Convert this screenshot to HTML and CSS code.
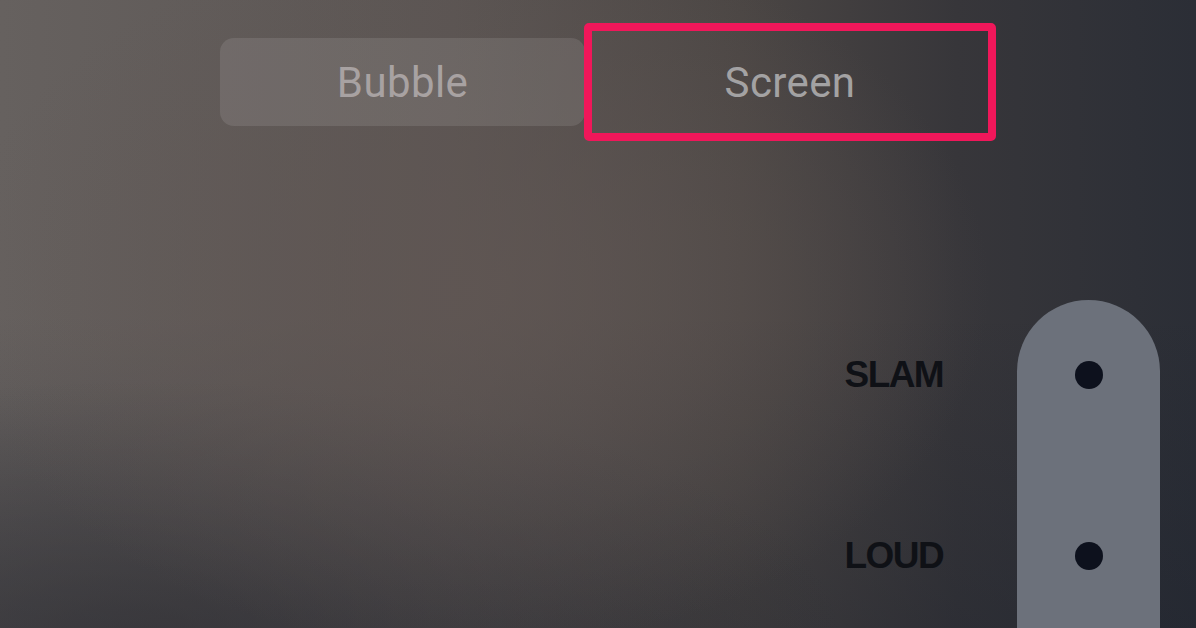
FILE: index.html
```html
<!DOCTYPE html>
<html>
<head>
<meta charset="utf-8">
<link rel="stylesheet" href="styles.css">
</head>
<body>
<div class="page">
  <div class="seg">
    <div class="opt bubble">Bubble</div>
    <div class="opt screen">Screen</div>
  </div>
  <div class="panel">
    <div class="track"></div>
    <div class="label l1">SLAM</div>
    <div class="dot d1"></div>
    <div class="label l2">LOUD</div>
    <div class="dot d2"></div>
  </div>
</div>
</body>
</html>
```
FILE: styles.css
```css
html, body {
  margin: 0;
  padding: 0;
}
body {
  width: 1196px;
  height: 628px;
  overflow: hidden;
  font-family: Roboto, "Liberation Sans", sans-serif;
  background:
    radial-gradient(ellipse 520px 360px at 470px 290px, rgba(96, 86, 83, 0.8) 0%, rgba(96, 86, 83, 0) 100%),
    radial-gradient(ellipse 700px 260px at 150px 640px, rgba(40, 40, 46, 0.55) 0%, rgba(40, 40, 46, 0) 100%),
    linear-gradient(to bottom, rgba(0,0,0,0) 50%, rgba(22, 28, 40, 0.3) 100%),
    linear-gradient(to right, #66615f 0%, #5b5553 38%, #4b4644 62%, #37363a 80%, #2b2e36 100%);
}
.page {
  height: 628px;
  display: flex;
  flex-direction: column;
}
.seg {
  display: flex;
  align-items: center;
  margin: 23px 0 0 220px;
}
.opt {
  display: flex;
  align-items: center;
  justify-content: center;
  font-size: 42px;
  letter-spacing: 0.4px;
  color: #a9a4a3;
  box-sizing: border-box;
}
.bubble {
  width: 365px;
  height: 88px;
  border-radius: 14px;
  background: rgba(255, 255, 255, 0.1);
  color: #a8a2a2;
}
.screen {
  width: 412px;
  height: 118px;
  margin-left: -1px;
  border: 8px solid #f0175a;
  border-radius: 5px;
  color: #a3a2a3;
}
.panel {
  flex: 1;
  margin-top: 159px;
  display: grid;
  grid-template-columns: auto 143px;
  grid-template-rows: 61px 28px 153px 28px 1fr;
  column-gap: 74px;
  justify-content: end;
  padding-right: 36px;
}
.track {
  grid-column: 2;
  grid-row: 1 / -1;
  background: #6c717b;
  border-radius: 72px 72px 0 0;
}
.label {
  grid-column: 1;
  justify-self: end;
  align-self: center;
  font-family: "Liberation Sans", Arial, sans-serif;
  font-weight: bold;
  font-size: 37px;
  line-height: 28px;
  letter-spacing: -1.6px;
  color: #0f1116;
}
.l1 { grid-row: 2; }
.l2 { grid-row: 4; }
.dot {
  grid-column: 2;
  justify-self: center;
  width: 28px;
  height: 28px;
  border-radius: 50%;
  background: #0d111d;
}
.d1 { grid-row: 2; }
.d2 { grid-row: 4; }
```
